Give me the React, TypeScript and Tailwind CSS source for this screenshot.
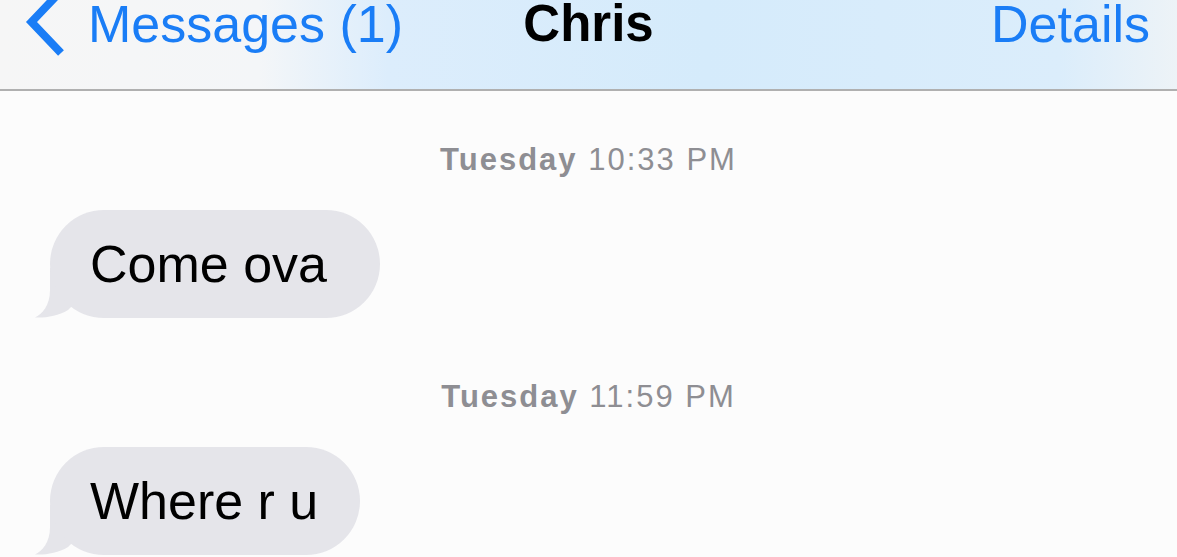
import React from 'react';

interface Message {
  id: string;
  day: string;
  time: string;
  text: string;
  padRight: string;
}

const messages: Message[] = [
  { id: '1', day: 'Tuesday', time: '10:33 PM', text: 'Come ova', padRight: 'pr-[53px]' },
  { id: '2', day: 'Tuesday', time: '11:59 PM', text: 'Where r u', padRight: 'pr-[42px]' },
];

function BackChevron() {
  return (
    <svg width="48" height="58" viewBox="0 0 48 58" className="shrink-0 overflow-hidden">
      <path d="M39 -9 L9.5 22 L39 53" fill="none" stroke="#1a7df6" strokeWidth="8" strokeLinejoin="miter" />
    </svg>
  );
}

// little hook at the bottom-left of an incoming bubble
function Tail() {
  return (
    <svg width="50" height="50" viewBox="0 0 50 50" className="absolute bottom-0 left-[-20px]">
      <path d="M20 0 L20 22 C20 38 12 46 5 49.5 C16 50 28 48 38 42 L50 30 L50 0 Z" fill="#e5e5ea" />
    </svg>
  );
}

function Bubble({ text, padRight }: { text: string; padRight: string }) {
  return (
    <div className="relative self-start ml-[50px]">
      <Tail />
      <div className={`relative rounded-[54px] bg-[#e5e5ea] pl-10 ${padRight} py-6 text-[52px] leading-[60px] text-black`}>
        {text}
      </div>
    </div>
  );
}

export default function App() {
  return (
    <div className="w-[1177px] h-[557px] overflow-hidden flex flex-col bg-[#fcfcfc] font-['Liberation_Sans',Arial,sans-serif]">
      <div className="h-[91px] shrink-0 grid grid-cols-[1fr_auto_1fr] items-start border-b-2 border-[#b0b0b0] bg-[linear-gradient(to_right,#f6f6f6_0%,#f4f6f8_22%,#dcedfc_33%,#d5ebfb_60%,#dbedfb_90%,#edf3f7_100%)]">
        <div className="flex items-start pl-[22px]">
          <BackChevron />
          <span className="ml-[18px] pt-[1px] text-[52px] leading-[46px] text-[#1a7df6]">Messages (1)</span>
        </div>
        <span className="pt-[1px] text-[51px] leading-[46px] font-bold text-black">Chris</span>
        <div className="flex justify-end pr-[27px]">
          <span className="pt-[1px] text-[52px] leading-[46px] text-[#1a7df6]">Details</span>
        </div>
      </div>

      <div className="flex flex-col">
        {messages.map((m, i) => (
          <div key={m.id} className={`flex flex-col ${i === 0 ? 'pt-[51px]' : 'pt-[61px]'}`}>
            <div className="text-center text-[31px] leading-[36px] tracking-[2px] text-[#8e8e93]">
              <span className="font-bold">{m.day}</span> {m.time}
            </div>
            <div className="h-[32px]" />
            <Bubble text={m.text} padRight={m.padRight} />
          </div>
        ))}
      </div>
    </div>
  );
}
